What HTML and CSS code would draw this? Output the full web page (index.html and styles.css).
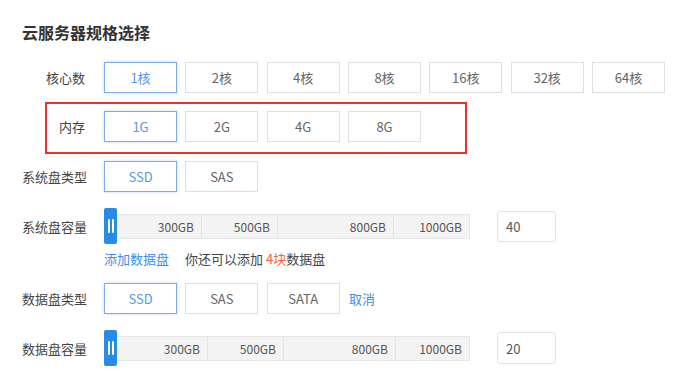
FILE: index.html
```html
<!DOCTYPE html>
<html lang="zh-CN">
<head>
<meta charset="utf-8">
<title>云服务器规格选择</title>
<link rel="stylesheet" href="styles.css">
</head>
<body>
<div class="page">
  <h1 class="title">云服务器规格选择</h1>

  <div class="row row-cpu">
    <div class="label">核心数</div>
    <div class="options">
      <span class="opt active">1核</span>
      <span class="opt">2核</span>
      <span class="opt">4核</span>
      <span class="opt">8核</span>
      <span class="opt">16核</span>
      <span class="opt">32核</span>
      <span class="opt">64核</span>
    </div>
  </div>

  <div class="highlight">
    <div class="row row-inner">
      <div class="label">内存</div>
      <div class="options">
        <span class="opt active">1G</span>
        <span class="opt">2G</span>
        <span class="opt">4G</span>
        <span class="opt">8G</span>
      </div>
    </div>
  </div>

  <div class="row row-sys">
    <div class="label">系统盘类型</div>
    <div class="options">
      <span class="opt active">SSD</span>
      <span class="opt">SAS</span>
    </div>
  </div>

  <div class="row row-slider slider-a">
    <div class="label">系统盘容量</div>
    <div class="slider">
      <span class="handle"><i></i><i></i></span>
      <div class="track">
        <span class="seg s1">300GB</span>
        <span class="seg s2">500GB</span>
        <span class="seg s3">800GB</span>
        <span class="seg s4">1000GB</span>
      </div>
    </div>
    <div class="num">40</div>
  </div>

  <div class="row row-add">
    <div class="label"></div>
    <div class="add">
      <span class="link">添加数据盘</span>
      <span class="hint">你还可以添加 <em class="count">4块</em>数据盘</span>
    </div>
  </div>

  <div class="row row-data">
    <div class="label">数据盘类型</div>
    <div class="options">
      <span class="opt active">SSD</span>
      <span class="opt">SAS</span>
      <span class="opt">SATA</span>
      <span class="link cancel">取消</span>
    </div>
  </div>

  <div class="row row-slider slider-b">
    <div class="label">数据盘容量</div>
    <div class="slider">
      <span class="handle"><i></i><i></i></span>
      <div class="track">
        <span class="seg s1">300GB</span>
        <span class="seg s2">500GB</span>
        <span class="seg s3">800GB</span>
        <span class="seg s4">1000GB</span>
      </div>
    </div>
    <div class="num">20</div>
  </div>
</div>
</body>
</html>
```

FILE: styles.css
```css
* { box-sizing: border-box; }

body {
  margin: 0;
  background: #fff;
  font-family: "Noto Sans CJK SC", "Noto Sans", sans-serif;
  color: #333;
}

.page {
  padding: 21px 0 0 22px;
}

.title {
  margin: 0;
  font-size: 16px;
  line-height: 22px;
  height: 22px;
  font-weight: bold;
  color: #333;
}

.row {
  display: flex;
  align-items: center;
}

.label {
  width: 63px;
  flex: none;
  margin-right: 19px;
  text-align: right;
  font-size: 13px;
  color: #444;
  white-space: nowrap;
}

.options {
  display: flex;
  align-items: center;
  gap: 8.33px;
}

.opt {
  width: 73px;
  height: 31px;
  display: flex;
  align-items: center;
  justify-content: center;
  border: 1px solid #dedede;
  background: #fff;
  font-size: 13px;
  color: #666;
}

.opt.active {
  border-color: #7eaae6;
  color: #5a97e2;
  box-shadow: 0 0 3px rgba(90, 150, 230, 0.35);
}

.row-cpu { margin-top: 19px; }

.highlight {
  margin: 9px 0 0 23px;
  width: 422px;
  border: 2px solid #e53232;
  padding: 7px 0 10px 0;
}

.row-inner { margin-left: -25px; }

.row-sys { margin-top: 7px; }

.row-slider { height: 36px; }
.slider-a { margin-top: 16px; }
.slider-b { margin-top: 16px; }

.slider {
  display: flex;
  align-items: center;
  height: 36px;
}

.handle {
  width: 13px;
  height: 36px;
  background: #2a8ae8;
  border-radius: 2px;
  display: flex;
  align-items: center;
  justify-content: center;
  gap: 2px;
}

.handle i {
  display: block;
  width: 2px;
  height: 14px;
  background: #fff;
  border-radius: 1px;
}

.track {
  display: flex;
  height: 25px;
  border: 1px solid #e6e6e6;
  border-left: none;
  background: #f3f3f3;
}

.seg {
  display: flex;
  align-items: center;
  justify-content: flex-end;
  padding-right: 7px;
  font-size: 12px;
  color: #555;
  border-right: 1px solid #e3e3e3;
}

.seg.s4 { border-right: none; }

.slider-a .s1 { width: 85px; }
.slider-a .s2 { width: 76px; }
.slider-a .s3 { width: 116px; }
.slider-a .s4 { width: 75px; }

.slider-b .s1 { width: 91px; }
.slider-b .s2 { width: 76px; }
.slider-b .s3 { width: 112px; }
.slider-b .s4 { width: 73px; }

.num {
  margin-left: 27px;
  width: 59px;
  height: 31px;
  border: 1px solid #e2e2e2;
  border-radius: 3px;
  display: flex;
  align-items: center;
  padding-left: 8px;
  font-size: 13px;
  color: #555;
}

.slider-b .num { height: 32px; }

.row-add {
  margin-top: 5px;
  height: 20px;
}

.add {
  display: flex;
  align-items: center;
  gap: 16px;
  font-size: 13px;
  line-height: 20px;
}

.link { color: #3d8ee6; font-size: 13px; }
.hint { color: #444; }
.count { font-style: normal; color: #f5603a; }

.row-data { margin-top: 14px; }
.cancel { margin-left: 1px; }
```
